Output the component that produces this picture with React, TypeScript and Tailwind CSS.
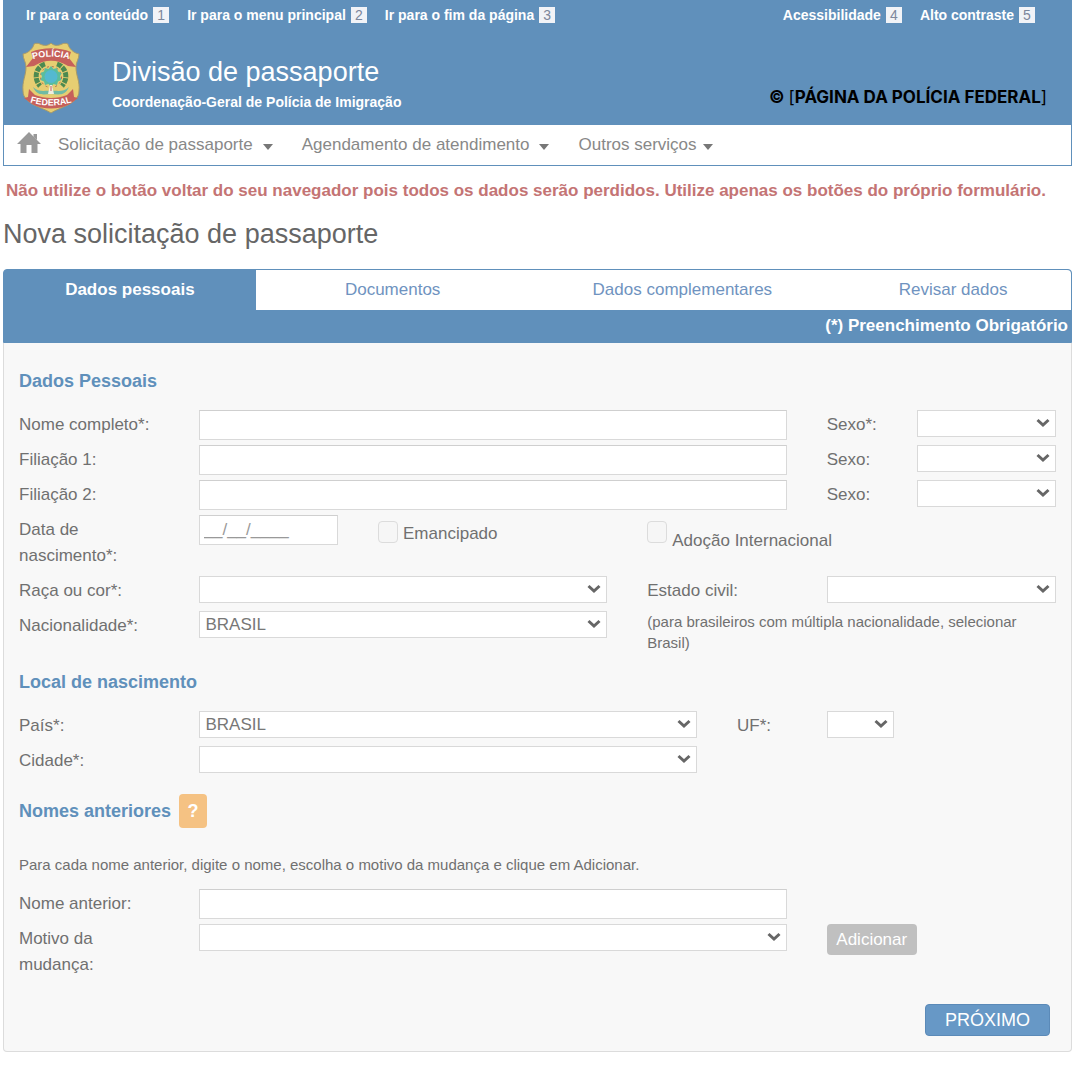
import React, { useState } from 'react';

interface FieldProps {
  id: string;
  className?: string;
}

interface SelectFieldProps extends FieldProps {
  options?: string[];
}

const quickLinks = [
  { label: 'Ir para o conteúdo', shortcut: 1 },
  { label: 'Ir para o menu principal', shortcut: 2 },
  { label: 'Ir para o fim da página', shortcut: 3 },
];

const accessLinks = [
  { label: 'Acessibilidade', shortcut: 4 },
  { label: 'Alto contraste', shortcut: 5 },
];

const tabs = ['Dados pessoais', 'Documentos', 'Dados complementares', 'Revisar dados'];

const ShortcutLink: React.FC<{ label: string; shortcut: number }> = ({ label, shortcut }) => (
  <a href="#" className="flex items-center gap-[5px] text-sm leading-4 font-bold text-white">
    {label}
    <span className="flex h-4 w-4 items-center justify-center bg-[#f1f3f7] font-normal text-[#7d879c]">{shortcut}</span>
  </a>
);

const PoliceBadge = () => (
  <svg viewBox="0 0 58 72" className="h-[72px] w-[58px]" role="img" aria-label="Polícia Federal">
    <path
      d="M29 1C26 4 22 4 18 2C16 1 14 1 12 2C11 7 6 11 1 12C1 17 4 20 4 25C4 34 0 39 1 49C1 62 20 65 29 71C38 65 57 62 57 49C58 39 54 34 54 25C54 20 57 17 57 12C52 11 47 7 46 2C44 1 42 1 40 2C36 4 32 4 29 1Z"
      fill="#e6ce72"
      stroke="#a89a68"
      strokeWidth="1"
    />
    <path d="M9 10C21 5 37 5 49 10L47 16L54 25L46 24C35 17 23 17 12 24L4 25L11 16Z" fill="#c6605b" />
    <path d="M7 47L13 53C23 57 35 57 45 53L51 47L52 55L56 56L48 62C36 68 22 68 10 62L2 56L6 55Z" fill="#c6605b" />
    <path d="M23 22C14 25 11 36 18 44M35 22C44 25 47 36 40 44" fill="none" stroke="#4c8a50" strokeWidth="5" strokeDasharray="5 1" />
    <circle cx="29" cy="35" r="10.5" fill="none" stroke="#b0674f" strokeWidth="1" strokeDasharray="2 3" />
    <path
      d="M29 24L31.500 27L35 26L36 29.500L39.500 31L38 34.500L39.500 38L36 39.500L35 43L31.500 42L29 45L26.500 42L23 43L22 39.500L18.500 38L20 34.500L18.500 31L22 29.500L23 26L26.500 27Z"
      fill="#5bbd9c"
    />
    <circle cx="29" cy="34.500" r="6.500" fill="#54b9d0" />
    <path d="M11 45C17 51 24 48 28 49H30C34 48 41 51 47 45C43 55 35 52 29 52C23 52 15 55 11 45Z" fill="#70bba4" />
    <path d="M28 43H30L32 52H26Z" fill="#f0eee0" />
    <path d="M29 44V49" stroke="#c6605b" strokeWidth="1" />
    <path id="badge-top" d="M9 18Q29 11 49 18" fill="none" />
    <path id="badge-bottom" d="M7 60Q29 67 51 60" fill="none" />
    <g fill="#fff" fontFamily="Liberation Sans, sans-serif" fontWeight="700" fontSize="9" textAnchor="middle">
      <text>
        <textPath href="#badge-top" startOffset="50%">POLÍCIA</textPath>
      </text>
      <text>
        <textPath href="#badge-bottom" startOffset="50%">FEDERAL</textPath>
      </text>
    </g>
  </svg>
);

const HomeIcon = () => (
  <svg viewBox="0 0 24 22" className="h-[22px] w-6" fill="#999">
    <path d="M12 0L24 12H20.500V21H14.500V13H9.500V21H3.500V12H0Z" />
    <path d="M16.500 2H20V8L16.500 5Z" />
  </svg>
);

const Caret = () => (
  <svg viewBox="0 0 10 6" className="mt-1 h-1.5 w-2.5" fill="#777">
    <path d="M0 0H10L5 6Z" />
  </svg>
);

const FieldLabel: React.FC<{ htmlFor: string; className?: string; children: React.ReactNode }> = ({
  htmlFor,
  className = 'col-span-2',
  children,
}) => (
  <label htmlFor={htmlFor} className={`pt-0.5 ${className}`}>
    {children}
  </label>
);

const TextField: React.FC<FieldProps & { placeholder?: string }> = ({ id, className = '', placeholder }) => (
  <input
    id={id}
    type="text"
    placeholder={placeholder}
    className={`h-[30px] w-full border border-[#d9d9d9] border-t-[#cfcfcf] bg-white px-1 placeholder:text-[#999] ${className}`}
  />
);

const SelectField: React.FC<SelectFieldProps> = ({ id, className = '', options = [''] }) => (
  <div className={`relative h-[27px] ${className}`}>
    <select
      id={id}
      className="h-[27px] w-full appearance-none border border-[#d9d9d9] bg-white px-1.5 leading-6 text-[#777]"
    >
      {options.map(option => (
        <option key={option}>{option}</option>
      ))}
    </select>
    <svg viewBox="0 0 14 10" className="pointer-events-none absolute top-2 right-1.5 h-2.5 w-3.5" fill="none">
      <path d="M1.500 2L7 7L12.500 2" stroke="#666" strokeWidth="3" />
    </svg>
  </div>
);

const CheckField: React.FC<FieldProps & { label: string; labelClass: string }> = ({
  id,
  className = '',
  label,
  labelClass,
}) => {
  const [checked, setChecked] = useState(false);

  return (
    <div className={`flex items-start gap-[5px] pt-1.5 ${className}`}>
      <input
        id={id}
        type="checkbox"
        checked={checked}
        onChange={() => setChecked(!checked)}
        className="h-[22px] w-5 shrink-0 appearance-none rounded-sm border border-[#dcdcdc] bg-[#f6f6f6] checked:bg-[#6090bb]"
      />
      <label htmlFor={id} className={labelClass}>{label}</label>
    </div>
  );
};

const Row: React.FC<{ children: React.ReactNode }> = ({ children }) => (
  <div className="grid min-h-[30px] grid-cols-12 items-start gap-x-10">{children}</div>
);

const SectionTitle: React.FC<{ children: React.ReactNode }> = ({ children }) => (
  <h2 className="flex items-center gap-2 text-lg leading-[26px] font-bold text-[#6090bb]">{children}</h2>
);

const Header = () => (
  <header className="border-x border-b border-[#6090bb]">
    <div className="bg-[#6090bb] pr-9 pb-[9px] pl-[22px]">
      <div className="flex justify-between pt-[7px]">
        <nav className="flex gap-[18px]">
          {quickLinks.map(link => <ShortcutLink key={link.label} {...link} />)}
        </nav>
        <nav className="flex gap-[18px]">
          {accessLinks.map(link => <ShortcutLink key={link.label} {...link} />)}
        </nav>
      </div>
      <div className="-mr-3 -ml-1 flex items-center pt-[17px]">
        <PoliceBadge />
        <div className="ml-8 flex-1 pt-4 text-white">
          <h1 className="text-[27px] leading-8">Divisão de passaporte</h1>
          <p className="text-sm leading-7 font-bold">Coordenação-Geral de Polícia de Imigração</p>
        </div>
        <p className="pt-[38px] font-['Inter',sans-serif] text-[17px] font-bold text-black">
          © <span className="font-normal">[</span>PÁGINA DA POLÍCIA FEDERAL<span className="font-normal">]</span>
        </p>
      </div>
    </div>
    <nav className="flex h-10 items-center bg-white pl-[13px] text-[17px] text-[#888]">
      <a href="#" aria-label="Início" className="mr-[17px] mb-1">
        <HomeIcon />
      </a>
      <button className="mr-[29px] flex items-center gap-2.5">Solicitação de passaporte <Caret /></button>
      <button className="mr-[29px] flex items-center gap-2.5">Agendamento de atendimento <Caret /></button>
      <button className="flex items-center gap-1.5">Outros serviços <Caret /></button>
    </nav>
  </header>
);

const App: React.FC = () => {
  const [activeTab, setActiveTab] = useState(tabs[0]);

  return (
    <div className="min-h-screen bg-white pr-2 pb-6 pl-[3px] font-['Liberation_Sans',Arial,sans-serif] text-[17px] leading-[26px] text-[#707070]">
      <Header />

      <p className="mt-3 pl-[3px] font-bold text-[#c47474]">
        Não utilize o botão voltar do seu navegador pois todos os dados serão perdidos. Utilize apenas os botões do próprio formulário.
      </p>
      <h1 className="mt-3.5 text-[27px] leading-8 text-[#666]">Nova solicitação de passaporte</h1>

      <div className="mt-[19px] rounded-t border border-[#6090bb] bg-[#6090bb]">
        <div role="tablist" className="grid h-10 grid-cols-[252fr_274fr_306fr_236fr]">
          {tabs.map(tab => (
            <button
              key={tab}
              type="button"
              role="tab"
              aria-selected={tab === activeTab}
              onClick={() => setActiveTab(tab)}
              className={tab === activeTab ? 'font-bold text-white' : 'bg-white text-[#6f93c0] last:rounded-tr'}
            >
              {tab}
            </button>
          ))}
        </div>
        <p className="pt-[3px] pr-[3px] pb-[3px] text-right font-bold text-white">(*) Preenchimento Obrigatório</p>
      </div>

      <form className="rounded-b border border-t-0 border-[#dcdcdc] bg-[#f8f8f8] pt-[25px] pr-[15px] pb-[15px] pl-[15px]">
        <SectionTitle>Dados Pessoais</SectionTitle>
        <div className="mt-4 flex flex-col gap-[5px]">
          <Row>
            <FieldLabel htmlFor="nome">Nome completo*:</FieldLabel>
            <TextField id="nome" className="col-span-7" />
            <FieldLabel htmlFor="sexo" className="col-span-1">Sexo*:</FieldLabel>
            <SelectField id="sexo" className="col-span-2" />
          </Row>
          <Row>
            <FieldLabel htmlFor="filiacao1">Filiação 1:</FieldLabel>
            <TextField id="filiacao1" className="col-span-7" />
            <FieldLabel htmlFor="sexo1" className="col-span-1">Sexo:</FieldLabel>
            <SelectField id="sexo1" className="col-span-2" />
          </Row>
          <Row>
            <FieldLabel htmlFor="filiacao2">Filiação 2:</FieldLabel>
            <TextField id="filiacao2" className="col-span-7" />
            <FieldLabel htmlFor="sexo2" className="col-span-1">Sexo:</FieldLabel>
            <SelectField id="sexo2" className="col-span-2" />
          </Row>
          <Row>
            <FieldLabel htmlFor="nascimento" className="col-span-2 pb-0.5">Data de nascimento*:</FieldLabel>
            <TextField id="nascimento" className="col-span-2" placeholder="__/__/____" />
            <CheckField id="emancipado" className="col-span-3" label="Emancipado" labelClass="" />
            <CheckField id="adocao" className="col-span-5" label="Adoção Internacional" labelClass="pt-[7px]" />
          </Row>
          <Row>
            <FieldLabel htmlFor="raca">Raça ou cor*:</FieldLabel>
            <SelectField id="raca" className="col-span-5" />
            <FieldLabel htmlFor="civil">Estado civil:</FieldLabel>
            <SelectField id="civil" className="col-span-3" />
          </Row>
          <Row>
            <FieldLabel htmlFor="nacionalidade">Nacionalidade*:</FieldLabel>
            <SelectField id="nacionalidade" className="col-span-5" options={['BRASIL']} />
            <p className="col-span-5 text-[15px] leading-[21px]">
              (para brasileiros com múltipla nacionalidade, selecionar Brasil)
            </p>
          </Row>
        </div>

        <div className="mt-4">
          <SectionTitle>Local de nascimento</SectionTitle>
        </div>
        <div className="mt-4 flex flex-col gap-[5px]">
          <Row>
            <FieldLabel htmlFor="pais">País*:</FieldLabel>
            <SelectField id="pais" className="col-span-6" options={['BRASIL']} />
            <FieldLabel htmlFor="uf" className="col-span-1">UF*:</FieldLabel>
            <div className="col-span-3">
              <SelectField id="uf" className="w-[67px]" />
            </div>
          </Row>
          <Row>
            <FieldLabel htmlFor="cidade">Cidade*:</FieldLabel>
            <SelectField id="cidade" className="col-span-6" />
          </Row>
        </div>

        <div className="mt-[18px]">
          <SectionTitle>
            Nomes anteriores
            <button type="button" aria-label="Ajuda" className="h-[34px] w-7 rounded bg-[#f5c283] text-white">?</button>
          </SectionTitle>
        </div>
        <p className="mt-[26px] text-[15px] leading-[21px]">
          Para cada nome anterior, digite o nome, escolha o motivo da mudança e clique em Adicionar.
        </p>
        <div className="mt-3.5 flex flex-col gap-[5px]">
          <Row>
            <FieldLabel htmlFor="nome-anterior">Nome anterior:</FieldLabel>
            <TextField id="nome-anterior" className="col-span-7" />
          </Row>
          <Row>
            <FieldLabel htmlFor="motivo">Motivo da mudança:</FieldLabel>
            <SelectField id="motivo" className="col-span-7" />
            <div className="col-span-3">
              <button type="button" className="h-[31px] w-[90px] rounded bg-[#c0c0c0] text-white">Adicionar</button>
            </div>
          </Row>
        </div>

        <div className="mt-[26px] flex justify-end pr-1.5">
          <button
            type="button"
            className="h-8 w-[125px] rounded border border-[#5b8ab8] bg-[#6798c6] text-lg leading-6 text-white"
          >
            PRÓXIMO
          </button>
        </div>
      </form>
    </div>
  );
};

export default App;
